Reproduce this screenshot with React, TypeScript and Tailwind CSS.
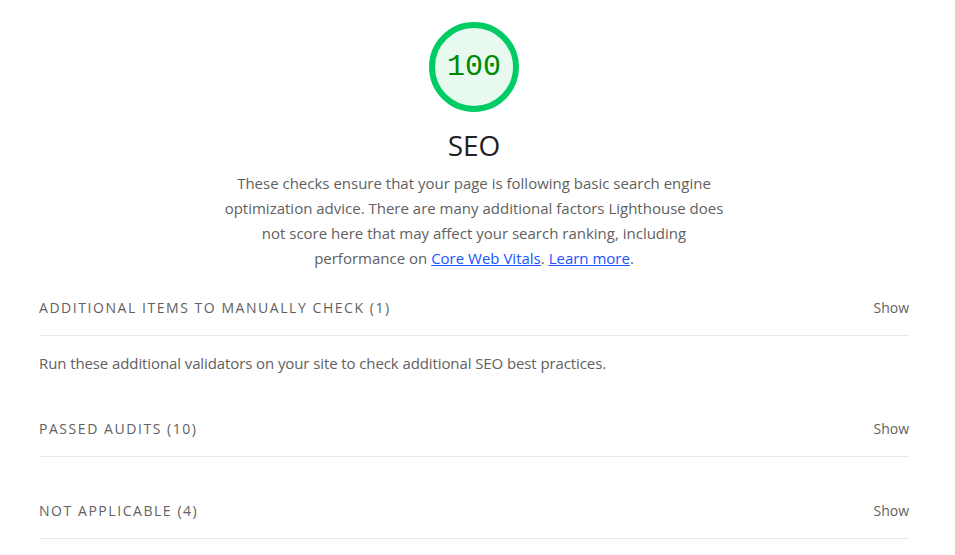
const FONT = { fontFamily: '"Open Sans", "Noto Sans CJK KR", sans-serif' };

type Group = {
  title: string;
  description?: string;
};

const groups: Group[] = [
  {
    title: 'Additional items to manually check (1)',
    description: 'Run these additional validators on your site to check additional SEO best practices.',
  },
  { title: 'Passed audits (10)' },
  { title: 'Not applicable (4)' },
];

function Gauge({ score }: { score: number }) {
  return (
    <div className="relative w-[96px] h-[96px]">
      <svg viewBox="0 0 96 96" className="w-[96px] h-[96px]">
        <circle cx="48" cy="48" r="42" fill="#e8faf0" stroke="#00cc66" strokeWidth="6" />
      </svg>
      <div
        className="absolute inset-0 flex items-center justify-center text-[30px] text-[#008800]"
        style={{ fontFamily: '"Liberation Mono", "DejaVu Sans Mono", monospace' }}
      >
        {score}
      </div>
    </div>
  );
}

export default function App() {
  return (
    <div className="w-[955px] h-[555px] bg-white overflow-hidden text-[#212121]" style={FONT}>
      <div className="w-[948px] flex flex-col items-center pt-[19px]">
        <Gauge score={100} />
        <h1 className="mt-[12px] text-[28px] leading-[36px] text-[#212121]">SEO</h1>
        <p className="mt-[8px] max-w-[500px] text-center text-[15px] leading-[25px] text-[#616161]">
          These checks ensure that your page is following basic search engine optimization advice. There are many
          additional factors Lighthouse does not score here that may affect your search ranking, including
          performance on{' '}
          <a href="#" className="text-[#1a53ff] underline">
            Core Web Vitals
          </a>
          .{' '}
          <a href="#" className="text-[#1a53ff] underline">
            Learn more
          </a>
          .
        </p>
      </div>

      <div className="ml-[39px] w-[870px] mt-[9px]">
        {groups.map((g) => (
          <div key={g.title}>
            <div className="flex items-center justify-between h-[56px] border-b border-[#e8e8e8]">
              <span className="uppercase text-[14px] tracking-[1.55px] text-[#616161]">{g.title}</span>
              <span className="text-[14px] text-[#616161]">Show</span>
            </div>
            {g.description ? (
              <p className="pt-[16px] pb-[26px] text-[15px] tracking-[-0.1px] text-[#616161]">{g.description}</p>
            ) : (
              <div className="h-[26px]" />
            )}
          </div>
        ))}
      </div>
    </div>
  );
}
